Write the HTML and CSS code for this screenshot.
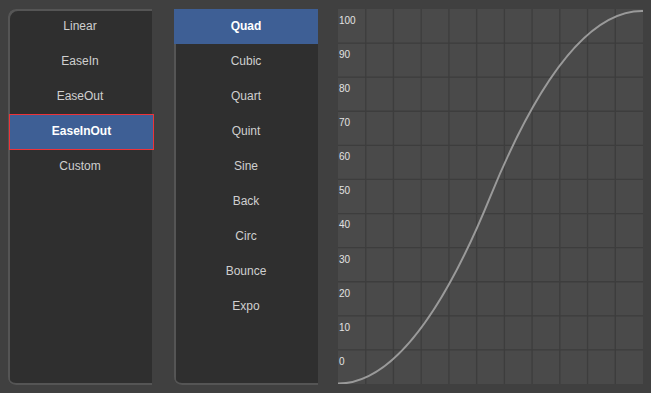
FILE: index.html
```html
<!DOCTYPE html>
<html lang="en">
  <head>
    <meta charset="UTF-8" />
    <meta name="viewport" content="width=device-width, initial-scale=1.0" />
    <title>Easing</title>
    <link rel="stylesheet" href="styles.css">
  </head>
  <body>
    <div class="app">
      <!-- easing type -->
      <ul class="list list-type">
        <li>Linear</li>
        <li>EaseIn</li>
        <li>EaseOut</li>
        <li class="active">EaseInOut</li>
        <li>Custom</li>
      </ul>

      <!-- easing family -->
      <ul class="list list-family">
        <li class="active">Quad</li>
        <li>Cubic</li>
        <li>Quart</li>
        <li>Quint</li>
        <li>Sine</li>
        <li>Back</li>
        <li>Circ</li>
        <li>Bounce</li>
        <li>Expo</li>
      </ul>

      <!-- preview -->
      <div class="chart">
        <svg class="plot" viewBox="0 0 305 375" width="305" height="375">
          <g class="grid">
            <line x1="27.73" y1="0" x2="27.73" y2="375" />
            <line x1="55.45" y1="0" x2="55.45" y2="375" />
            <line x1="83.18" y1="0" x2="83.18" y2="375" />
            <line x1="110.91" y1="0" x2="110.91" y2="375" />
            <line x1="138.64" y1="0" x2="138.64" y2="375" />
            <line x1="166.36" y1="0" x2="166.36" y2="375" />
            <line x1="194.09" y1="0" x2="194.09" y2="375" />
            <line x1="221.82" y1="0" x2="221.82" y2="375" />
            <line x1="249.55" y1="0" x2="249.55" y2="375" />
            <line x1="277.27" y1="0" x2="277.27" y2="375" />
            <line x1="0" y1="34.09" x2="305" y2="34.09" />
            <line x1="0" y1="68.18" x2="305" y2="68.18" />
            <line x1="0" y1="102.27" x2="305" y2="102.27" />
            <line x1="0" y1="136.36" x2="305" y2="136.36" />
            <line x1="0" y1="170.45" x2="305" y2="170.45" />
            <line x1="0" y1="204.55" x2="305" y2="204.55" />
            <line x1="0" y1="238.64" x2="305" y2="238.64" />
            <line x1="0" y1="272.73" x2="305" y2="272.73" />
            <line x1="0" y1="306.82" x2="305" y2="306.82" />
            <line x1="0" y1="340.91" x2="305" y2="340.91" />
          </g>
          <path class="curve" d="M0,374.6 Q76,374.6 152,188.3 T304,2 L305,2" />
        </svg>
        <div class="axis">
          <span>100</span>
          <span>90</span>
          <span>80</span>
          <span>70</span>
          <span>60</span>
          <span>50</span>
          <span>40</span>
          <span>30</span>
          <span>20</span>
          <span>10</span>
          <span>0</span>
        </div>
      </div>
    </div>
  </body>
</html>
```

FILE: styles.css
```css
:root {
  --page-bg: #404040;
  --panel-bg: #2f2f2f;
  --panel-line: #555555;
  --selected: #3e5f95;
  --chart-bg: #4a4a4a;
  --grid: #3d3d3d;
}

body {
  margin: 0;
  padding: 9px 8px 8px;
  background: var(--page-bg);
  font-family: "Liberation Sans", Arial, sans-serif;
  color: #cfcfcf;
}

.app {
  display: flex;
  align-items: flex-start;
}

.list {
  list-style: none;
  margin: 0 22px 0 0;
  padding: 0;
  width: 144px;
  height: 376px;
  box-sizing: border-box;
  background: var(--panel-bg);
  border-radius: 8px 0 0 8px;
  box-shadow: inset 2px 2px 0 var(--panel-line), inset 0 -2px 0 var(--panel-line);
}

.list-family {
  margin-right: 20px;
}

.list li {
  height: 35px;
  line-height: 35px;
  text-align: center;
  font-size: 12px;
}

.list li.active {
  background: var(--selected);
  color: #fff;
  font-weight: 700;
}

/* the type list marks its selection with a red frame */
.list-type li.active {
  position: relative;
  width: 145px;
  height: 36px;
  line-height: 35px;
  margin: 0 0 -1px 1px;
  box-shadow: inset 0 0 0 1px #ee3338;
}

.chart {
  display: grid;
  width: 305px;
  height: 375px;
  background: var(--chart-bg);
}

.chart > * {
  grid-area: 1 / 1;
}

.plot {
  display: block;
}

.grid line {
  stroke: var(--grid);
  stroke-width: 1.3;
}

.curve {
  fill: none;
  stroke: #9a9a9a;
  stroke-width: 2;
}

.axis {
  display: flex;
  flex-direction: column;
}

.axis span {
  box-sizing: border-box;
  height: 34.09px;
  padding: 6px 0 0 1px;
  font-size: 10px;
  line-height: 11px;
  color: #e2e2e2;
}
```
